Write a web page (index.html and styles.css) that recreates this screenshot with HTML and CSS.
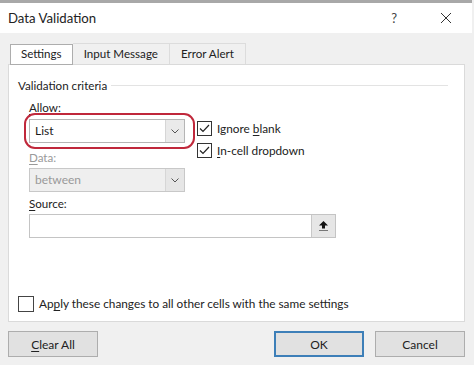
FILE: index.html
```html
<!DOCTYPE html>
<html lang="en">
<head>
    <meta charset="utf-8" />
    <title>Data Validation</title>
    <link rel="stylesheet" href="styles.css">
</head>
<body>
    <div class="dialog">
        <div class="titlebar">
            <span class="title">Data Validation</span>
            <span class="help">?</span>
            <svg class="close" width="12" height="12" viewBox="0 0 12 12">
                <path d="M1 1L11 11M11 1L1 11" stroke="#333" stroke-width="1" fill="none" />
            </svg>
        </div>

        <div class="content">
            <div class="tabs">
                <div class="tab active">Settings</div>
                <div class="tab">Input Message</div>
                <div class="tab">Error Alert</div>
            </div>

            <div class="panel">
                <div class="group-title">
                    <span>Validation criteria</span>
                    <span class="rule"></span>
                </div>

                <div class="criteria">
                    <div class="col">
                        <div class="label"><u>A</u>llow:</div>
                        <div class="select-wrap">
                            <div class="select">
                                <span class="value">List</span>
                                <span class="arrow">
                                    <svg width="8" height="5" viewBox="0 0 8 5"><path d="M0.5 0.5L4 4L7.5 0.5" stroke="#555" fill="none" /></svg>
                                </span>
                            </div>
                            <span class="highlight"></span>
                        </div>
                        <div class="label disabled"><u>D</u>ata:</div>
                        <div class="select disabled">
                            <span class="value">between</span>
                            <span class="arrow">
                                <svg width="8" height="5" viewBox="0 0 8 5"><path d="M0.5 0.5L4 4L7.5 0.5" stroke="#555" fill="none" /></svg>
                            </span>
                        </div>
                    </div>
                    <div class="checks">
                        <label class="check">
                            <span class="box"><svg width="11" height="9" viewBox="0 0 11 9"><path d="M1 4.5L4 7.5L10 1" stroke="#222" stroke-width="1.2" fill="none" /></svg></span>
                            <span>Ignore <u>b</u>lank</span>
                        </label>
                        <label class="check">
                            <span class="box"><svg width="11" height="9" viewBox="0 0 11 9"><path d="M1 4.5L4 7.5L10 1" stroke="#222" stroke-width="1.2" fill="none" /></svg></span>
                            <span><u>I</u>n-cell dropdown</span>
                        </label>
                    </div>
                </div>

                <div class="source">
                    <div class="label"><u>S</u>ource:</div>
                    <div class="source-input">
                        <span class="field"></span>
                        <span class="picker">
                            <svg width="11" height="12" viewBox="0 0 11 12">
                                <path d="M5.5 1L1 5.5H4V8.5H7V5.5H10Z" fill="#111" />
                                <path d="M1 10.5H10" stroke="#777" stroke-width="1" />
                            </svg>
                        </span>
                    </div>
                </div>

                <label class="check apply">
                    <span class="box"></span>
                    <span>Ap<u>p</u>ly these changes to all other cells with the same settings</span>
                </label>
            </div>

            <div class="buttons">
                <button class="btn"><u>C</u>lear All</button>
                <span class="spacer"></span>
                <button class="btn default">OK</button>
                <button class="btn">Cancel</button>
            </div>
        </div>
    </div>
</body>
</html>
```

FILE: styles.css
```css
body {
    margin: 0;
    font-family: Lato, 'Open Sans', sans-serif;
    font-size: 11.6px;
    color: #1a1a1a;
    background-color: #f0f0f0;
}

u {
    text-decoration-thickness: 1px;
    text-underline-offset: 2px;
}

.dialog {
    width: 472px;
    height: 365px;
    background-color: #f0f0f0;
}

.titlebar {
    height: 30px;
    border-top: 3px solid #a8a8a8;
    background-color: #ffffff;
    display: flex;
    align-items: center;
    padding-left: 8px;
}

.title {
    font-size: 13.2px;
    color: #222;
    flex: 1;
}

.help {
    font-size: 13px;
    color: #444;
    margin-right: 43px;
}

.close {
    margin-right: 20px;
}

.content {
    padding: 10px 7px 0 8px;
}

.tabs {
    display: flex;
    height: 21px;
    padding-left: 2px;
}

.tab {
    padding: 0 11px;
    line-height: 20px;
    border: 1px solid #dcdcdc;
    border-bottom: none;
    border-left: none;
    color: #222;
}

.tab.active {
    background-color: #ffffff;
    border: 1px solid #adadad;
    padding: 0 10px;
    line-height: 18px;
    height: 19px;
    margin-top: 1px;
}

.panel {
    background-color: #ffffff;
    border: 1px solid #dadada;
    height: 256px;
    padding: 0 0 0 9px;
    display: flex;
    flex-direction: column;
}

.group-title {
    display: flex;
    align-items: center;
    margin-top: 12px;
    height: 16px;
    color: #222;
}

.rule {
    flex: 1;
    border-top: 1px solid #e3e3e3;
    margin: 0 16px 0 4px;
}

.criteria {
    display: flex;
    padding-left: 11px;
    margin-top: 7px;
}

.col {
    width: 156px;
}

.label {
    line-height: 16px;
    height: 16px;
    color: #222;
}

.label.disabled {
    color: #9a9a9a;
    margin-top: 7px;
}

.select-wrap {
    position: relative;
    margin-top: 3px;
}

.select {
    display: flex;
    height: 22px;
    border: 1px solid #b5b5b5;
    background-color: #ffffff;
}

.select .value {
    flex: 1;
    padding-left: 5px;
    line-height: 22px;
    font-size: 12px;
}

.select .arrow {
    width: 18px;
    background-color: #eaeaea;
    border-left: 1px solid #d6d6d6;
    display: flex;
    align-items: center;
    justify-content: center;
}

.select.disabled {
    background-color: #efefef;
    border-color: #c8c8c8;
    margin-top: 2px;
}

.select.disabled .value {
    color: #999;
}

.select.disabled .arrow {
    background-color: #e6e6e6;
}

.highlight {
    position: absolute;
    left: -5px;
    top: -6px;
    right: -10px;
    bottom: -6px;
    border: 2px solid #c0283b;
    border-radius: 11px;
}

.checks {
    margin-left: 12px;
    margin-top: 21px;
}

.check {
    display: flex;
    align-items: center;
    height: 15px;
    margin-bottom: 7px;
    color: #222;
    font-size: 11.8px;
}

.box {
    width: 13px;
    height: 13px;
    border: 1px solid #333;
    background-color: #ffffff;
    margin-right: 5px;
    display: flex;
    align-items: center;
    justify-content: center;
}

.source {
    padding-left: 11px;
    margin-top: 4px;
}

.source-input {
    display: flex;
    width: 305px;
    height: 22px;
    margin-top: 2px;
    border: 1px solid #c4c4c4;
}

.source-input .field {
    flex: 1;
    background-color: #ffffff;
}

.source-input .picker {
    width: 23px;
    background-color: #e6e6e6;
    border-left: 1px solid #c8c8c8;
    display: flex;
    align-items: center;
    justify-content: center;
}

.apply {
    margin-top: auto;
    margin-bottom: 10px;
}

.apply .box {
    width: 14px;
    height: 14px;
    border-color: #444;
}

.buttons {
    display: flex;
    margin-top: 9px;
    gap: 11px;
}

.spacer {
    flex: 1;
}

.btn {
    width: 90px;
    height: 26px;
    font-family: Lato, 'Open Sans', sans-serif;
    font-size: 12px;
    color: #222;
    background-color: #e1e1e1;
    border: 1px solid #adadad;
    padding: 0;
}

.btn.default {
    border: 2px solid #3d7fb8;
}
```
